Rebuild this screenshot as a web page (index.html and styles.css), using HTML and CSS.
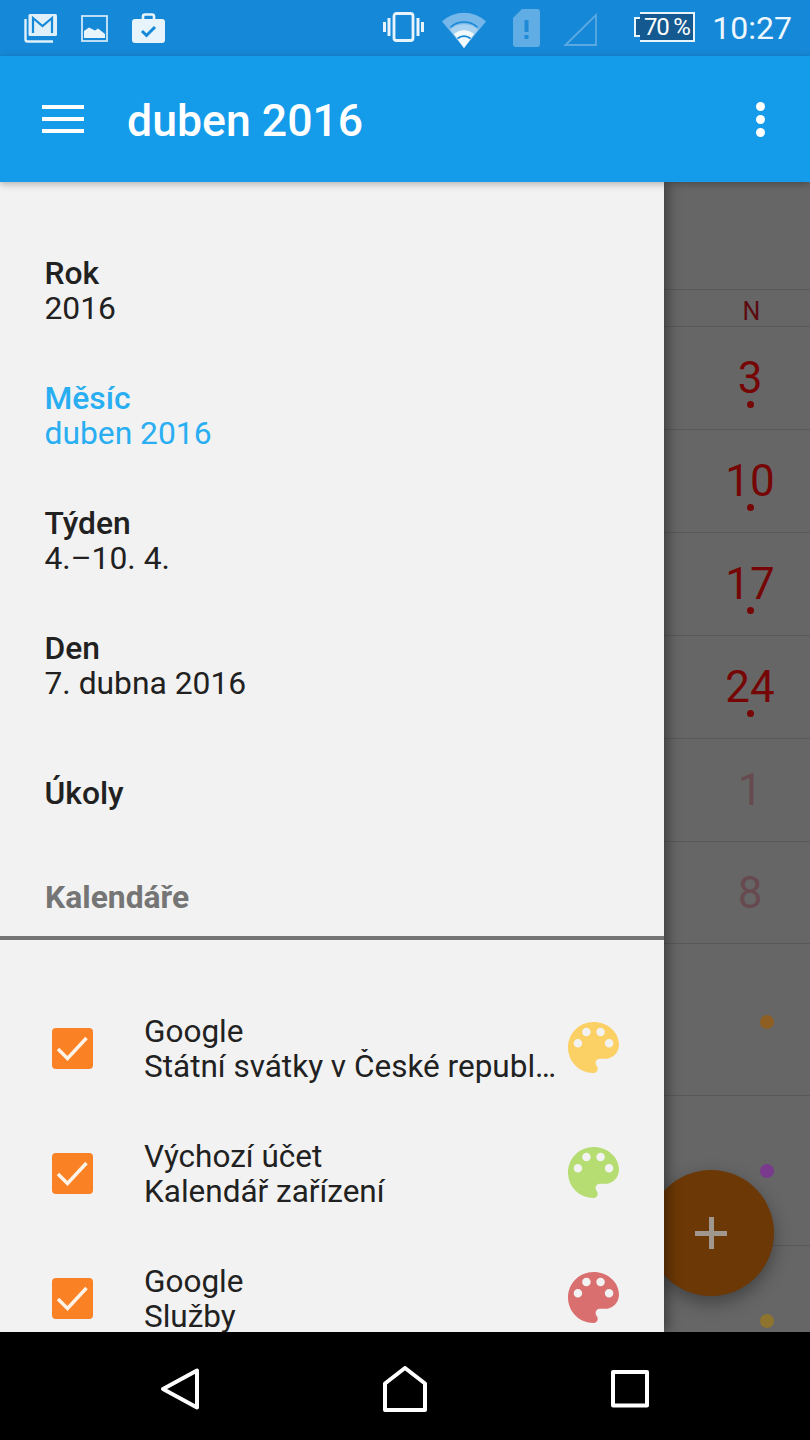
FILE: index.html
```html
<!DOCTYPE html>
<html lang="cs">
<head>
<meta charset="utf-8">
<title>Kalendář</title>
<link rel="stylesheet" href="styles.css">
</head>
<body>
<div class="phone">
  <header class="statusbar">
    <svg class="si w33" viewBox="0 0 33 30"><path d="M1.500 6v20.500a2 2 0 0 0 2 2H29" fill="none" stroke="#dff0fb" stroke-width="2.400"/><rect x="4.500" y="1" width="28.500" height="22" rx="1.500" fill="#dff0fb"/><path d="M9 20V5l9.500 8L28 5v15" fill="none" stroke="#1688d8" stroke-width="2.200"/></svg>
    <svg class="si w27" viewBox="0 0 27 27"><rect x="1" y="1" width="25" height="25" fill="none" stroke="#cfe8f9" stroke-width="1.800"/><path d="M3 23v-7l5-3.500 6 3 3-2 7 5.500v4z" fill="#e8f4fc"/></svg>
    <svg class="si w33" viewBox="0 0 33 30"><path d="M11 7V3.500A2 2 0 0 1 13 1.500h7a2 2 0 0 1 2 2V7" fill="none" stroke="#e8f4fc" stroke-width="2.600"/><rect x="0" y="6" width="33" height="24" rx="3" fill="#e8f4fc"/><path d="M10 18l4.500 4.500L23 14" fill="none" stroke="#1688d8" stroke-width="3"/></svg>
    <div class="status-right">
      <svg class="si w41" viewBox="0 0 41 30"><rect x="11" y="1.500" width="19" height="27" rx="2.500" fill="none" stroke="#e8f4fc" stroke-width="2.800"/><path d="M1.500 10v10M6 6v18M35 6v18M39.500 10v10" stroke="#e8f4fc" stroke-width="3"/></svg>
      <svg class="si w44" viewBox="0 0 44 36"><path d="M0 9.500a32 32 0 0 1 44 0L22 36z" fill="#74b7e8"/><path d="M8 17.500a21 21 0 0 1 28 0L22 36z" fill="#a9d3f1"/><path d="M12 22a15 15 0 0 1 20 0L22 36z" fill="#f2f9fd"/><path d="M8.500 15.200a20 20 0 0 1 27 0" fill="none" stroke="#1688d8" stroke-width="1.500"/><path d="M15.500 26.500a10 10 0 0 1 13 0" fill="none" stroke="#1688d8" stroke-width="1.800"/></svg>
      <svg class="si w27" viewBox="0 0 27 38"><path d="M9 0h15a3 3 0 0 1 3 3v32a3 3 0 0 1-3 3H3a3 3 0 0 1-3-3V9z" fill="#60ace4"/><rect x="11.500" y="11" width="4" height="12" fill="#1f8ad6"/><rect x="11.500" y="26" width="4" height="4" fill="#1f8ad6"/></svg>
      <svg class="si w34" viewBox="0 0 34 33"><path d="M2.500 32 33 2v30z" fill="none" stroke="#5aa9e2" stroke-width="1.800"/></svg>
      <div class="battery"><span class="battery-nub"></span><span class="battery-body">70 %</span></div>
      <span class="clock">10:27</span>
    </div>
  </header>

  <div class="appbar">
    <button class="menu" aria-label="Menu"><span></span><span></span><span></span></button>
    <h1 class="title">duben 2016</h1>
    <div class="overflow"><span></span><span></span><span></span></div>
  </div>

  <main class="stage">
    <section class="calendar">
      <div class="row row-top"></div>
      <div class="row row-head"><span class="weekday">N</span></div>
      <div class="row row-week"><span class="num">3</span><i class="mini"></i></div>
      <div class="row row-week"><span class="num">10</span><i class="mini"></i></div>
      <div class="row row-week"><span class="num">17</span><i class="mini"></i></div>
      <div class="row row-week"><span class="num">24</span><i class="mini"></i></div>
      <div class="row row-week"><span class="num faded">1</span></div>
      <div class="row row-week row-short"><span class="num faded">8</span></div>
      <div class="row row-list row-a"><i class="dot brown"></i></div>
      <div class="row row-list"><i class="dot purple"></i></div>
      <div class="row row-list row-last"><i class="dot ochre"></i></div>
    </section>

    <button class="fab" aria-label="Přidat"><span class="plus"></span></button>

    <nav class="drawer">
      <div class="views">
        <a class="view"><strong>Rok</strong><span>2016</span></a>
        <a class="view active"><strong>Měsíc</strong><span>duben 2016</span></a>
        <a class="view"><strong>Týden</strong><span>4.–10. 4.</span></a>
        <a class="view"><strong>Den</strong><span>7. dubna 2016</span></a>
        <a class="view single"><strong>Úkoly</strong></a>
      </div>
      <h2 class="section">Kalendáře</h2>
      <div class="calendars">
        <div class="cal">
          <svg class="check" viewBox="0 0 41 41"><rect width="41" height="41" rx="4" fill="#fb8125"/><path d="M6 21l9.500 9.500L34.500 10" fill="none" stroke="#fdf3e8" stroke-width="3.500"/></svg>
          <div class="cal-text"><span>Google</span><span>Státní svátky v České republice</span></div>
          <svg class="palette" viewBox="3 3 18 18"><path fill="#fbd064" d="M12 3c-4.970 0-9 4.030-9 9s4.030 9 9 9c.83 0 1.500-.67 1.500-1.500 0-.39-.15-.74-.39-1.010-.23-.26-.38-.61-.38-.99 0-.83.67-1.500 1.500-1.500H16c2.760 0 5-2.240 5-5 0-4.420-4.030-8-9-8zm-5.500 9c-.83 0-1.500-.67-1.500-1.500S5.670 9 6.500 9 8 9.670 8 10.500 7.330 12 6.500 12zm3-4C8.670 8 8 7.330 8 6.500S8.670 5 9.500 5s1.500.67 1.500 1.500S10.330 8 9.500 8zm5 0c-.83 0-1.500-.67-1.500-1.500S13.670 5 14.500 5s1.500.67 1.500 1.500S15.330 8 14.500 8zm3 4c-.83 0-1.500-.67-1.500-1.500S16.670 9 17.500 9s1.500.67 1.500 1.500-.67 1.500-1.500 1.500z"/></svg>
        </div>
        <div class="cal">
          <svg class="check" viewBox="0 0 41 41"><rect width="41" height="41" rx="4" fill="#fb8125"/><path d="M6 21l9.500 9.500L34.500 10" fill="none" stroke="#fdf3e8" stroke-width="3.500"/></svg>
          <div class="cal-text"><span>Výchozí účet</span><span>Kalendář zařízení</span></div>
          <svg class="palette" viewBox="3 3 18 18"><path fill="#b5dd72" d="M12 3c-4.970 0-9 4.030-9 9s4.030 9 9 9c.83 0 1.500-.67 1.500-1.500 0-.39-.15-.74-.39-1.010-.23-.26-.38-.61-.38-.99 0-.83.67-1.500 1.500-1.500H16c2.760 0 5-2.240 5-5 0-4.420-4.030-8-9-8zm-5.500 9c-.83 0-1.500-.67-1.500-1.500S5.670 9 6.500 9 8 9.670 8 10.500 7.330 12 6.500 12zm3-4C8.670 8 8 7.330 8 6.500S8.670 5 9.500 5s1.500.67 1.500 1.500S10.330 8 9.500 8zm5 0c-.83 0-1.500-.67-1.500-1.500S13.670 5 14.500 5s1.500.67 1.500 1.500S15.330 8 14.500 8zm3 4c-.83 0-1.500-.67-1.500-1.500S16.670 9 17.500 9s1.500.67 1.500 1.500-.67 1.500-1.500 1.500z"/></svg>
        </div>
        <div class="cal">
          <svg class="check" viewBox="0 0 41 41"><rect width="41" height="41" rx="4" fill="#fb8125"/><path d="M6 21l9.500 9.500L34.500 10" fill="none" stroke="#fdf3e8" stroke-width="3.500"/></svg>
          <div class="cal-text"><span>Google</span><span>Služby</span></div>
          <svg class="palette" viewBox="3 3 18 18"><path fill="#d9706f" d="M12 3c-4.970 0-9 4.030-9 9s4.030 9 9 9c.83 0 1.500-.67 1.500-1.500 0-.39-.15-.74-.39-1.010-.23-.26-.38-.61-.38-.99 0-.83.67-1.500 1.500-1.500H16c2.760 0 5-2.240 5-5 0-4.420-4.030-8-9-8zm-5.500 9c-.83 0-1.500-.67-1.500-1.500S5.670 9 6.500 9 8 9.670 8 10.500 7.330 12 6.500 12zm3-4C8.670 8 8 7.330 8 6.500S8.670 5 9.500 5s1.500.67 1.500 1.500S10.330 8 9.500 8zm5 0c-.83 0-1.500-.67-1.500-1.500S13.670 5 14.500 5s1.500.67 1.500 1.500S15.330 8 14.500 8zm3 4c-.83 0-1.500-.67-1.500-1.500S16.670 9 17.500 9s1.500.67 1.500 1.500-.67 1.500-1.500 1.500z"/></svg>
        </div>
      </div>
    </nav>
  </main>

  <footer class="navbar">
    <svg class="nav-icon" viewBox="0 0 44 46"><path d="M39 4.500v37L5 23z" fill="none" stroke="#fff" stroke-width="4" stroke-linejoin="round"/></svg>
    <svg class="nav-icon" viewBox="0 0 44 46"><path d="M2 44V17.500L22 2l20 15.500V44z" fill="none" stroke="#fff" stroke-width="4" stroke-linejoin="round"/></svg>
    <svg class="nav-icon" viewBox="0 0 44 46"><rect x="5" y="6" width="34" height="33.500" fill="none" stroke="#fff" stroke-width="4" stroke-linejoin="round"/></svg>
  </footer>
</div>
</body>
</html>
```

FILE: styles.css
```css
* { box-sizing: border-box; }
html, body { margin: 0; padding: 0; }
body { background: #000; font-family: Roboto, "Noto Sans", sans-serif; }

.phone { width: 810px; height: 1440px; display: flex; flex-direction: column; overflow: hidden; }

/* status bar */
.statusbar {
  height: 56px; flex: none; display: flex; align-items: center; gap: 24px;
  padding: 0 18px 0 24px; background: #1688d8;
}
.si { display: block; flex: none; height: auto; }
.w33 { width: 33px; }
.w27 { width: 27px; }
.w41 { width: 41px; }
.w44 { width: 44px; }
.w34 { width: 34px; }
.status-right { margin-left: auto; display: flex; align-items: center; }
.status-right .w41 { margin-right: 18px; margin-top: -2px; }
.status-right .w44 { margin-right: 27px; margin-top: 3px; }
.status-right .w27 { margin-right: 23px; margin-top: -1px; }
.status-right .w34 { margin-right: 37px; margin-top: 2px; }
.battery { display: flex; align-items: center; width: 61px; height: 30px; margin-right: 17px; margin-top: -2px; }
.battery-nub { width: 6px; height: 20px; border: 2px solid #e8f4fc; border-right: 0; background: #14598f; flex: none; }
.battery-body {
  flex: 1; height: 30px; border: 2px solid #e8f4fc; border-left-width: 0;
  background: #14598f;
  color: #fff; font-size: 24px; letter-spacing: -1.200px; line-height: 26px; text-align: center; white-space: nowrap;
}
.clock { color: #eef7fd; font-size: 32px; line-height: 40px; margin-top: -1px; }

/* app bar */
.appbar {
  height: 126px; flex: none; position: relative; z-index: 3; display: flex; align-items: center;
  background: #149be9; box-shadow: 0 2px 7px rgba(0,0,0,.28);
}
.menu {
  width: 42px; margin-left: 42px; padding: 0; border: 0; background: none;
  display: flex; flex-direction: column; gap: 8px;
}
.menu span { display: block; height: 4px; background: #fff; }
.title { margin: 4px 0 0 43px; color: #fff; font-size: 44.600px; font-weight: 500; line-height: 56px; }
.overflow { margin-left: auto; margin-right: 45px; display: flex; flex-direction: column; gap: 4px; }
.overflow span { display: block; width: 9px; height: 9px; border-radius: 50%; background: #fff; }

/* stage */
.stage { height: 1150px; flex: none; position: relative; overflow: hidden; background: #666; }

/* calendar behind the drawer */
.calendar { display: flex; flex-direction: column; }
.row {
  position: relative; display: flex; justify-content: center; flex: none;
  width: 120px; margin-left: 690px; border-bottom: 1px solid #595959;
}
.row::before {
  content: ""; position: absolute; left: -690px; width: 690px; bottom: -1px; height: 1px; background: #595959;
}
.row-top { height: 108px; }
.row-head { height: 37px; align-items: center; padding: 8px 0 0 3px; }
.row-week { height: 103px; align-items: center; }
.row-short { height: 102px; }
.row-list { height: 150px; justify-content: flex-start; padding: 68px 0 0 70px; }
.row-a { height: 152px; padding-top: 71px; }
.row-last { height: 90px; border-bottom: 0; }
.row-last::before { display: none; }
.weekday { color: #5c0a10; font-size: 25px; line-height: 30px; }
.num { color: #760606; font-size: 44px; line-height: 50px; }
.num.faded { color: #664a4f; }
.mini { position: absolute; left: 57px; top: 74px; width: 7px; height: 7px; border-radius: 50%; background: #760606; }
.dot { display: block; width: 14px; height: 14px; border-radius: 50%; }
.brown { background: #8e5f22; }
.purple { background: #7a3a8e; }
.ochre { background: #8f7430; }

.fab {
  position: absolute; left: 648px; top: 988px; width: 126px; height: 126px; padding: 0; border: 0;
  border-radius: 50%; background: #6c3805; box-shadow: 0 7px 18px rgba(0,0,0,.35);
}
.plus { position: absolute; left: 47px; top: 60.500px; width: 32px; height: 5px; background: #a0978f; }
.plus::after { content: ""; position: absolute; left: 13.500px; top: -13.500px; width: 5px; height: 32px; background: #a0978f; }

/* drawer */
.drawer {
  position: absolute; left: 0; top: 0; bottom: 0; width: 664px; z-index: 2; overflow: hidden;
  background: #f2f2f2; box-shadow: 4px 0 12px rgba(0,0,0,.4); color: #212121;
}
.views { padding-top: 46px; }
.view { display: flex; flex-direction: column; justify-content: center; height: 125px; padding-left: 44.500px; font-size: 31.800px; line-height: 35px; }
.view strong { font-weight: 500; }
.view.active { color: #29aef2; }
.view.single { height: 130px; }
.section {
  margin: 0; height: 82px; padding: 20px 0 0 45px; border-bottom: 4px solid #757575;
  color: #757575; font-size: 31.800px; font-weight: 700; line-height: 38px;
}
.calendars { padding-top: 46px; }
.cal { display: flex; align-items: center; height: 125px; padding-left: 52px; }
.check { width: 41px; height: 41px; flex: none; }
.cal-text {
  display: flex; flex-direction: column; width: 414px; margin-left: 51px; flex: none;
  font-size: 31.500px; line-height: 35px;
}
.cal-text span { white-space: nowrap; overflow: hidden; text-overflow: ellipsis; }
.palette { width: 51px; height: 51px; margin: -2px 0 0 10px; flex: none; display: block; }

/* navigation */
.navbar { flex: 1; padding-top: 6px; display: grid; grid-template-columns: repeat(3, 225px); justify-content: center; align-items: center; justify-items: center; background: #000; }
.nav-icon { width: 44px; height: 46px; display: block; }
```
